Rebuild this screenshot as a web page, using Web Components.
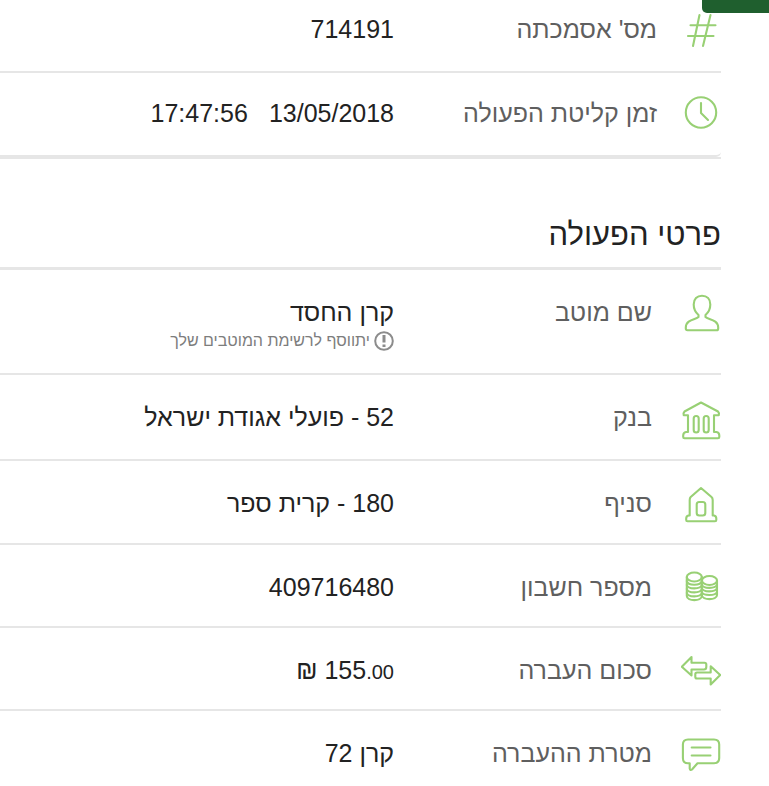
<!DOCTYPE html>
<html lang="he" dir="rtl">
<head>
<meta charset="utf-8">
<title>פרטי הפעולה</title>
<style>
	body {
		margin: 0;
		background: #fff;
		color: #222;
		font-family: "Liberation Sans", Arial, sans-serif;
		font-size: 25px;
		line-height: 30px;
	}
	main {
		padding-right: 48px;
		overflow: hidden;
	}
	.small {
		font-size: 20px;
	}
	.date, .time {
		display: inline-block;
	}
	.time {
		margin-right: 21px;
	}
</style>
</head>
<body>
<corner-tab></corner-tab>
<main>
	<detail-section class="receipt">
		<detail-row icon="hash" label="מס' אסמכתה" compact first>714191</detail-row>
		<detail-row icon="clock" label="זמן קליטת הפעולה" compact last><span class="date">13/05/2018</span><span class="time">17:47:56</span></detail-row>
	</detail-section>
	<detail-section heading="פרטי הפעולה">
		<detail-row icon="person" label="שם מוטב">קרן החסד<info-note slot="note">יתווסף לרשימת המוטבים שלך</info-note></detail-row>
		<detail-row icon="bank" label="בנק" style="--row-height: 84px">52 - פועלי אגודת ישראל</detail-row>
		<detail-row icon="branch" label="סניף" style="--row-height: 82px">180 - קרית ספר</detail-row>
		<detail-row icon="coins" label="מספר חשבון">409716480</detail-row>
		<detail-row icon="transfer" label="סכום העברה">155<span class="small">.00</span> ₪</detail-row>
		<detail-row icon="message" label="מטרת ההעברה">קרן 72</detail-row>
	</detail-section>
</main>

<script>
const icons = {
	hash: `<path d="M18.5 6 12 37M29.5 6 22 37M9.5 16.3H34.5M7 27H32.5"/>`,
	clock: `<circle cx="20" cy="19.5" r="15.2"/><path d="M20 10V20L27 27"/>`,
	person: `<path d="M17.500 22C14 19 12.700 15 12.700 11.500C12.700 6 16 2.800 21 2.800S29.300 6 29.300 11.500C29.300 15 28 19 24.500 22V24C27 26.500 37.200 26.500 37.200 34.500V35.500Q37.200 37.300 35.500 37.300H6.500Q4.800 37.300 4.800 35.500V34.500C4.800 26.500 15 26.500 17.500 24Z"/>`,
	bank: `<path d="M20 4.500 37 13.500Q38.500 15 37.800 17.300H33V34H35.500Q38.300 34.500 38.300 37.500V39Q38.300 40.200 37 40.200H3.500Q2.200 40.200 2.200 39V37.500Q2.200 34.500 5 34H7V17.300H2.700Q2 15 3.500 13.500Z"/>
		<rect x="12.700" y="18" width="5" height="16.500" rx="2.500"/><rect x="22.700" y="18" width="5" height="16.500" rx="2.500"/>`,
	branch: `<path d="M20 4 30.500 13Q31.700 14 31.700 16V31.500H33Q35.300 32 35.300 34.500V36Q35.300 37.300 34 37.300H6.500Q5.200 37.300 5.200 36V34.500Q5.200 32 7.500 31.500H8.700V16Q8.700 14 9.700 13Z"/>
		<rect x="15.700" y="18" width="8.600" height="13.500" rx="2.500"/>`,
	coins: `<ellipse cx="13.300" cy="9" rx="7.500" ry="4.500"/><path d="M5.800 9V28C5.800 33.500 20.800 33.500 20.800 28V9"/>
		<path d="M5.800 13C7 18 19.500 18 20.800 13M5.800 17C7 21.500 19.500 21.500 20.800 17M5.800 21C7 25.500 19.500 25.500 20.800 21M5.800 25C7 29.500 19.500 29.500 20.800 25"/>
		<ellipse cx="28.500" cy="12.500" rx="7.500" ry="4.500"/><path d="M36 12.500V27C36 32.500 21 32.500 20.800 27"/>
		<path d="M20.800 16.500C22 21 34.700 21 36 16.500M20.800 20C22 24.500 34.700 24.500 36 20M20.800 24C22 28 34.700 28 36 24"/>`,
	transfer: `<path d="M.8 15.700 10.500 6V11.700H23.500Q25.300 11.700 25.300 13.500V16Q25.300 18.500 23 18.500H10.500V24.500Z"/>
		<path d="M39.200 24 29.700 33.500V27.500H16Q14.300 27.500 14.300 26V23Q14.300 21.500 16 21.500H29.700V15.200Z"/>`,
	message: `<path d="M7 5.500H33Q38.200 5.500 38.200 10.500V24Q38.200 29.200 33 29.200H16.500L11 35.500Q9.300 37 8.700 34.500V29.200H7Q1.900 29.200 1.900 24V10.500Q1.900 5.500 7 5.500Z"/><path d="M10.700 13.500H29.500M10.700 21.500H29.500"/>`
}

class CornerTab extends HTMLElement {
	connectedCallback() {
		this.attachShadow({ mode: "open" }).innerHTML = `
		<style>
			:host {
				position: absolute;
				top: 0;
				right: 0;
				width: 67px;
				height: 13px;
				background: #1f5f2e;
				border-bottom-left-radius: 5px;
			}
		</style>
		`
	}
}
customElements.define("corner-tab", CornerTab)

class LineIcon extends HTMLElement {
	connectedCallback() {
		this.attachShadow({ mode: "open" }).innerHTML = `
		<style>
			:host {
				display: block;
			}
			svg {
				display: block;
				width: 40px;
				height: 42px;
				fill: none;
				stroke: #98d074;
				stroke-width: 2.1;
				stroke-linejoin: round;
				stroke-linecap: round;
			}
		</style>
		<svg viewBox="0 0 40 42" aria-hidden="true">${icons[this.getAttribute("name")] || ""}</svg>
		`
	}
}
customElements.define("line-icon", LineIcon)

class InfoNote extends HTMLElement {
	connectedCallback() {
		this.attachShadow({ mode: "open" }).innerHTML = `
		<style>
			:host {
				display: flex;
				align-items: center;
				gap: 4px;
				color: #7d7d7d;
				font-size: 16px;
				line-height: 24px;
			}
			svg {
				width: 20px;
				height: 20px;
				fill: none;
				stroke: #8c8c8c;
				stroke-width: 2;
			}
		</style>
		<svg viewBox="0 0 20 20" aria-hidden="true">
			<circle cx="10" cy="10" r="8.800"/>
			<path stroke-width="3" d="M10 4V11.500M10 13.500V16"/>
		</svg>
		<span><slot></slot></span>
		`
	}
}
customElements.define("info-note", InfoNote)

class DetailRow extends HTMLElement {
	connectedCallback() {
		const icon = this.getAttribute("icon") || ""
		const label = this.getAttribute("label") || ""

		this.attachShadow({ mode: "open" }).innerHTML = `
		<style>
			:host {
				--pad: 27px;
				--icon-pad: 23px;
				--label-start: 69px;
				display: grid;
				grid-template-columns: var(--label-start) calc(327px - var(--label-start)) 1fr;
				align-items: start;
				min-height: var(--row-height, 81px);
				border-bottom: 2px solid #e6e6e6;
			}
			:host([compact]) {
				--pad: 25px;
				--icon-pad: 20px;
				--label-start: 64px;
				--row-height: 82px;
			}
			:host([first]) {
				--pad: 14px;
				--icon-pad: 9px;
				--row-height: 71px;
			}
			:host([last]) {
				border-bottom-right-radius: 5px;
			}
			line-icon {
				padding-top: var(--icon-pad);
			}
			.label {
				padding-top: var(--pad);
				color: #5f5f5f;
			}
			.value {
				padding-top: var(--pad);
			}
			slot[name="note"]::slotted(*) {
				margin: 2px 0 20px;
			}
		</style>
		<line-icon name="${icon}"></line-icon>
		<div class="label">${label}</div>
		<div class="value"><slot></slot><slot name="note"></slot></div>
		`
	}
}
customElements.define("detail-row", DetailRow)

class DetailSection extends HTMLElement {
	connectedCallback() {
		const heading = this.getAttribute("heading")

		this.attachShadow({ mode: "open" }).innerHTML = `
		<style>
			:host {
				display: block;
			}
			:host(.receipt) {
				border-bottom: 2px solid #e6e6e6;
			}
			h2 {
				margin: 0;
				padding: 56px 0 12px;
				border-bottom: 3px solid #e6e6e6;
				font-size: 31px;
				font-weight: 400;
				line-height: 40px;
			}
		</style>
		${heading ? `<h2>${heading}</h2>` : ""}
		<slot></slot>
		`
	}
}
customElements.define("detail-section", DetailSection)
</script>
</body>
</html>
